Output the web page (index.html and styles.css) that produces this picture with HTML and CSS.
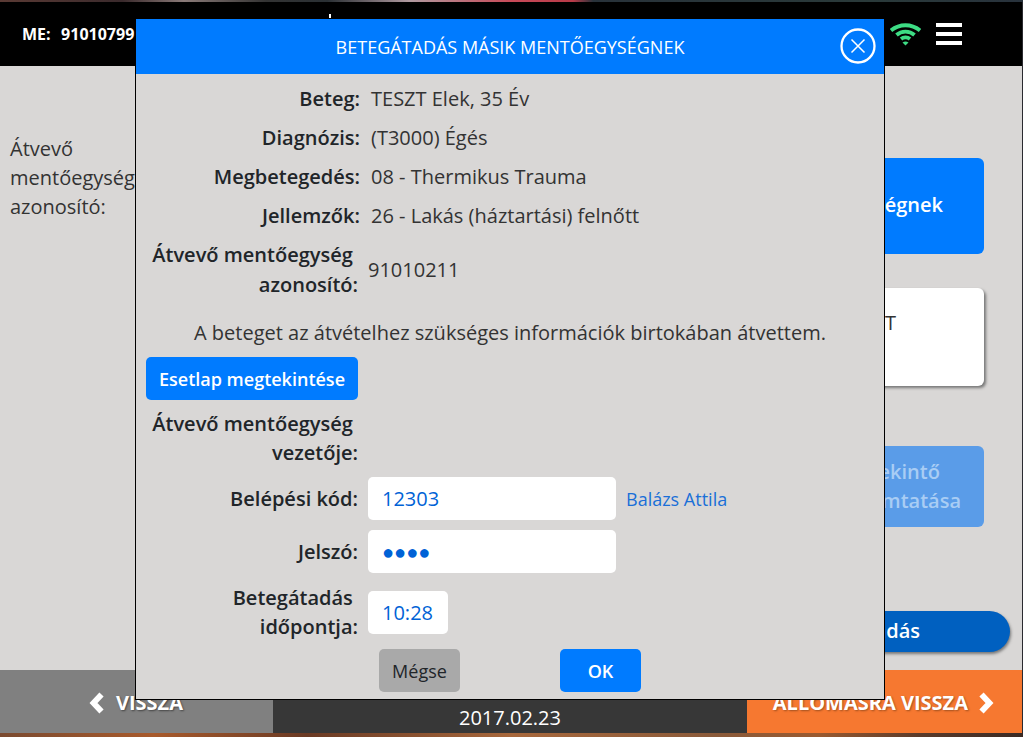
FILE: index.html
```html
<!DOCTYPE html>
<html lang="hu">
<head>
<meta charset="utf-8">
<title>Betegátadás</title>
<link rel="stylesheet" href="styles.css">
</head>
<body>
<div class="app">
  <header class="topbar">
    <div class="me"><span>ME:</span><span>91010799</span></div>
    <div class="top-icons">
      <svg class="wifi" width="31" height="24" viewBox="0 0 31 24"><path class="w1" d="M1 8.500C9.500 1.500 21.500 1.500 30 8.500"/><path class="w2" d="M6.500 13C11.500 8.500 19.500 8.500 24.500 13"/><path class="w3" d="M11 17C13.500 15 17.500 15 20 17"/><path class="w4" d="M15.500 23.500l-3-3c2-1.500 4-1.500 6 0z"/></svg>
      <div class="burger"><i></i><i></i><i></i></div>
    </div>
  </header>
  <main class="content">
    <div class="left-label">Átvevő mentőegység azonosító:</div>
    <div class="right-col">
      <div class="side blue"><span>mentőegységnek</span></div>
      <div class="side white"><span>TESZT</span></div>
      <div class="side faded"><span class="faded-text">Betekintő<br>nyomtatása</span></div>
      <div class="pill"><span>Betegátadás</span></div>
    </div>
  </main>
  <footer class="footer">
    <div class="back"><svg class="chev" width="16" height="24" viewBox="0 0 16 24"><path d="M12.500 3.500L4.500 12l8 8.500"/></svg><span>VISSZA</span></div>
    <div class="date">2017.02.23</div>
    <div class="forward"><span>ÁLLOMÁSRA VISSZA</span><svg class="chev" width="16" height="24" viewBox="0 0 16 24"><path d="M3.500 3.500l8 8.500-8 8.500"/></svg></div>
  </footer>
</div>
<span class="tick"></span>
<section class="modal">
  <div class="modal-head">
    <h1>BETEGÁTADÁS MÁSIK MENTŐEGYSÉGNEK</h1>
    <svg class="close" width="36" height="36" viewBox="0 0 36 36"><circle cx="18" cy="18" r="16.500"/><path d="M11.500 11.500l13 13M24.500 11.500l-13 13"/></svg>
  </div>
  <div class="modal-body">
    <div class="info"><b>Beteg:</b><span>TESZT Elek, 35 Év</span></div>
    <div class="info"><b>Diagnózis:</b><span>(T3000) Égés</span></div>
    <div class="info"><b>Megbetegedés:</b><span>08 - Thermikus Trauma</span></div>
    <div class="info"><b>Jellemzők:</b><span>26 - Lakás (háztartási) felnőtt</span></div>
    <div class="info two"><b>Átvevő mentőegység&nbsp;<br>azonosító:</b><span>91010211</span></div>
    <p class="note">A beteget az átvételhez szükséges információk birtokában átvettem.</p>
    <button class="view">Esetlap megtekintése</button>
    <div class="lead"><b>Átvevő mentőegység&nbsp;<br>vezetője:</b></div>
    <div class="field code"><b>Belépési kód:</b><div class="input wide">12303</div><a>Balázs Attila</a></div>
    <div class="field pass"><b>Jelszó:</b><div class="input wide dots">●●●●</div></div>
    <div class="field time"><b>Betegátadás&nbsp;<br>időpontja:</b><div class="input short">10:28</div></div>
    <div class="actions"><button class="cancel">Mégse</button><button class="ok">OK</button></div>
  </div>
</section>
</body>
</html>
```
FILE: styles.css
```css
* { box-sizing: border-box; }
html, body { margin: 0; height: 100%; overflow: hidden; }
body {
  width: 1023px; height: 737px; position: relative;
  font-family: "Open Sans", "Noto Sans", sans-serif; color: #212529;
  background:
    linear-gradient(90deg, #5a3a34, #3a2a2c 12%, #8a7a78 18%, #333 26%, #2a3034 32%, #b09aa0 40%, #c84a58 50%, #b83a48 56%, #28323a 58%, #2a3a3a 85%, #28323c) top / 100% 2px no-repeat,
    linear-gradient(90deg, #7a4a30, #a85a2c 15%, #6a3a24 30%, #a8683c 50%, #8a5a3a 70%, #9a5a30 80%, #5a3a2a 90%, #3a2a24) bottom / 100% 4px no-repeat,
    #2a2a30;
}
.app { display: flex; flex-direction: column; width: 1022px; height: 731px; margin-top: 2px; }
.topbar { height: 64px; background: #000; color: #fff; display: flex; justify-content: space-between; padding: 0 0 0 22px; flex: none; }
.me { display: flex; gap: 10.500px; font-size: 16px; font-weight: 700; padding-top: 21px; }
.top-icons { position: relative; width: 132px; }
.wifi { position: absolute; left: 0; top: 20px; }
.wifi path { fill: none; stroke: #3ddc84; stroke-width: 3.800px; }
.wifi .w4 { fill: #3ddc84; stroke: none; }
.burger { position: absolute; left: 46px; top: 21px; width: 26px; display: flex; flex-direction: column; gap: 5px; }
.burger i { display: block; height: 4px; background: #fff; }
.content { flex: 1; background: #d9d7d6; position: relative; display: flex; justify-content: space-between; }
.left-label { width: 130px; margin: 68px 0 0 10px; font-size: 20px; line-height: 29px; color: #333; }
.right-col { width: 260px; position: relative; display: flex; flex-direction: column; align-items: flex-end; padding: 92px 38px 0 0; }
.side { width: 250px; border-radius: 6px; font-size: 20px; font-weight: 600; display: flex; align-items: center; justify-content: flex-end; }
.side.blue { height: 96px; background: #007bff; color: #fff; padding: 0 41px 3px 0; }
.side.white { height: 98px; margin-top: 34px; background: #fff; color: #333; box-shadow: 2px 2px 3px #777; font-weight: 400; padding: 0 88px 30px 0; }
.side.faded { height: 81px; margin-top: 60px; background: #5a9ce8; color: #a9cdf4; padding: 0 23px 2px 0; line-height: 29px; }
.faded-text { display: block; text-align: left; }
.pill { position: absolute; top: 545px; right: 12px; width: 250px; height: 41px; border-radius: 21px; background: #0060c0; color: #fff; font-size: 20px; font-weight: 600; text-align: right; padding: 6px 90px 0 0; box-shadow: 1px 2px 3px #777; }
.footer { height: 63px; display: flex; flex: none; color: #fff; font-weight: 700; font-size: 20px; }
.back { width: 273px; background: #808080; display: flex; align-items: center; justify-content: flex-end; gap: 11px; padding: 2px 90px 0 0; text-shadow: 1px 1px 2px #444; }
.date { width: 474px; background: #373737; display: flex; align-items: flex-end; justify-content: center; font-weight: 400; font-size: 20px; padding-bottom: 2px; }
.forward { flex: 1; background: #f67830; display: flex; align-items: center; justify-content: flex-end; gap: 10px; padding: 2px 28px 0 0; text-shadow: 1px 1px 2px #a05020; }
.chev { flex: none; }
.chev path { fill: none; stroke: #fff; stroke-width: 5.800px; }
.tick { position: absolute; left: 329px; top: 14px; width: 2px; height: 4px; background: #fff; }
.modal { position: absolute; left: 135px; top: 19px; width: 750px; height: 681px; border: 1px solid #000; border-top: 0; background: #d9d7d6; }
.modal-head { height: 55px; background: #007bff; color: #fff; display: flex; align-items: center; justify-content: center; position: relative; }
.modal-head h1 { margin: 0; font-size: 18px; font-weight: 400; }
.close { position: absolute; left: 704px; top: 9px; }
.close circle, .close path { fill: none; stroke: #fff; stroke-width: 2.300px; }
.close path { stroke-width: 1.500px; }
.modal-body { padding: 10px 10px 0; font-size: 20px; color: #333; }
.modal-body b { font-weight: 600; color: #212529; text-align: right; width: 212px; flex: none; display: block; }
.info { display: flex; gap: 11px; height: 39px; line-height: 30px; }
.info b { width: 214px; }
.info.two { height: auto; align-items: center; gap: 10px; }
.info.two b { width: 212px; }
.note { margin: 18px 0 0; text-align: center; line-height: 30px; }
.view, .ok, .cancel { border: 0; font-family: inherit; border-radius: 5px; font-size: 18px; }
.view { display: block; width: 212px; height: 43px; background: #007bff; color: #fff; font-weight: 600; margin-top: 9px; padding: 0; }
.lead { margin-top: 9px; line-height: 29px; }
.field { display: flex; align-items: center; }
.field b { width: 212px; line-height: 29px; margin-right: 10px; }
.field.code { margin-top: 10px; }
.field.pass { margin-top: 10px; }
.field.time { margin-top: 10px; }
.input { height: 43px; background: #fff; border-radius: 5px; color: #0062d6; padding-left: 14px; line-height: 43px; font-size: 20px; }
.wide { width: 248px; }
.short { width: 80px; }
.field a { color: #1a6fd8; font-size: 18px; margin-left: 10px; }
.actions { display: flex; margin-top: 8px; padding-left: 233px; gap: 100px; }
.cancel { width: 81px; height: 43px; background: #a9a9a9; color: #212529; padding: 0; }
.ok { width: 81px; height: 43px; background: #007bff; color: #fff; font-weight: 600; padding: 0; }
```
